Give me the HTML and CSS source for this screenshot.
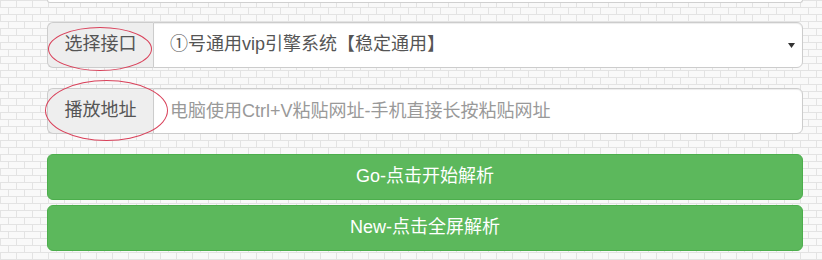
FILE: index.html
```html
<!DOCTYPE html>
<html lang="zh-CN">
<head>
<meta charset="utf-8">
<title>解析</title>
<link rel="stylesheet" href="styles.css">
</head>
<body>
<div class="wrap">
  <div class="prev-box"></div>
  <div class="group">
    <span class="addon">选择接口</span>
    <div class="control select">
      <span class="select-text">①号通用vip引擎系统【稳定通用】</span>
      <svg class="caret" width="7" height="5" viewBox="0 0 7 5"><path d="M0 0H7L3.5 5Z" fill="#333"/></svg>
    </div>
    <span class="mark mark-one"></span>
  </div>
  <div class="group">
    <span class="addon">播放地址</span>
    <input class="control input" type="text" placeholder="电脑使用Ctrl+V粘贴网址-手机直接长按粘贴网址">
    <span class="mark mark-two"></span>
  </div>
  <button class="btn" type="button">Go-点击开始解析</button>
  <button class="btn btn-next" type="button">New-点击全屏解析</button>
</div>
</body>
</html>
```
FILE: styles.css
```css
html, body {
  margin: 0;
  padding: 0;
}
body {
  height: 260px;
  overflow: hidden;
  font-family: "Liberation Sans", "Noto Sans CJK SC", sans-serif;
  background:
    linear-gradient(#e3e3e3 1px, transparent 1px) 0 0 / 16px 7px,
    conic-gradient(at 1px 7px, transparent 270deg, #e3e3e3 0) 0 0 / 16px 14px,
    conic-gradient(at 1px 7px, transparent 270deg, #e3e3e3 0) 8px 7px / 16px 14px,
    #f9f9f9;
}
.wrap {
  width: 756px;
  margin-left: 47px;
  display: flex;
  flex-direction: column;
}
.prev-box {
  height: 2px;
  background: #fff;
  border: 1px solid #d0d0d0;
  border-top: none;
  border-radius: 0 0 6px 6px;
  margin-bottom: 19px;
}
.group {
  position: relative;
  display: flex;
  height: 46px;
  margin-bottom: 20px;
}
.addon {
  box-sizing: border-box;
  width: 106px;
  height: 46px;
  display: flex;
  align-items: center;
  justify-content: center;
  background: #eee;
  border: 1px solid #ccc;
  border-right: none;
  border-radius: 6px 0 0 6px;
  color: #555;
  font-size: 18px;
  line-height: 1.3;
}
.control {
  box-sizing: border-box;
  flex: 1;
  height: 46px;
  background: #fff;
  border: 1px solid #ccc;
  border-radius: 0 6px 6px 0;
  box-shadow: inset 0 1px 1px rgba(0,0,0,.075);
  font-family: "Liberation Sans", "Noto Sans CJK SC", sans-serif;
  font-size: 18px;
  color: #555;
  padding: 0 16px;
  margin: 0;
}
.select {
  display: flex;
  align-items: center;
  justify-content: space-between;
  padding-right: 7px;
}
.select-text {
  line-height: 1.3;
}
.caret {
  display: block;
  margin-top: 1px;
}
.input {
  outline: none;
}
.input::placeholder {
  color: #999;
  opacity: 1;
}
.mark {
  position: absolute;
  border: 1px solid #d9415a;
  border-radius: 50%;
  pointer-events: none;
}
.mark-one {
  left: 1px;
  top: 5px;
  width: 102px;
  height: 42px;
}
.mark-two {
  left: -2px;
  top: -8px;
  width: 121px;
  height: 59px;
}
.btn {
  box-sizing: border-box;
  width: 100%;
  height: 46px;
  background: #5cb85c;
  border: 1px solid #4cae4c;
  border-radius: 6px;
  color: #fff;
  font-family: "Liberation Sans", "Noto Sans CJK SC", sans-serif;
  font-size: 18px;
  line-height: 1.3;
  padding: 0 16px;
  margin: 0;
  cursor: pointer;
}
.btn-next {
  margin-top: 5px;
}
```
